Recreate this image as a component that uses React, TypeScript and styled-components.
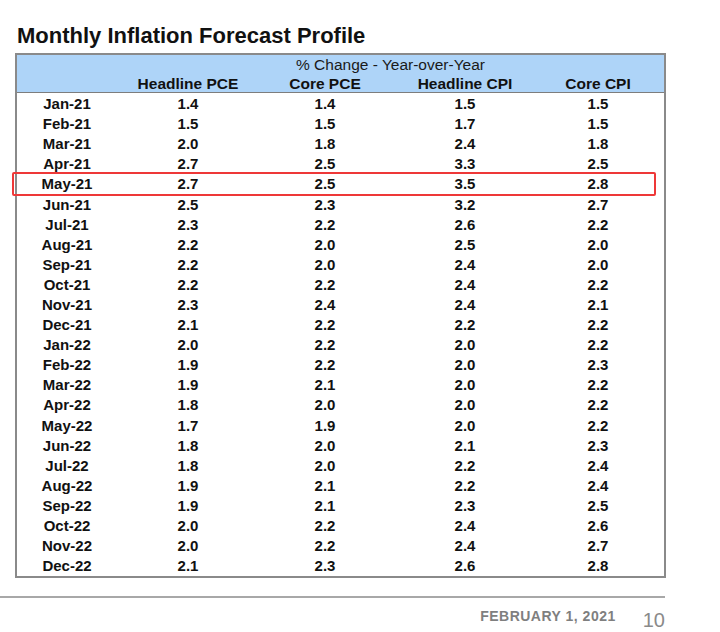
import React from "react";
import styled, { createGlobalStyle } from "styled-components";

const GlobalStyle = createGlobalStyle`
  html, body {
    margin: 0;
    padding: 0;
    background: #ffffff;
  }
  body {
    font-family: "Liberation Sans", Arial, sans-serif;
    color: #111111;
  }
`;

const Page = styled.div`
  width: 720px;
  height: 632px;
  padding-top: 23px;
  box-sizing: border-box;
  overflow: hidden;
`;

const Content = styled.div`
  padding-left: 15px;
`;

const Title = styled.h1`
  margin: 0 0 4px 2px;
  font-size: 22px;
  line-height: 26px;
  font-weight: 700;
  color: #111111;
`;

const TableWrap = styled.div`
  position: relative;
  width: 651px;
  box-sizing: border-box;
  border: 2px solid #8a8a8a;
`;

const cols = "100px 142px 132px 148px 118px 1fr";

const Header = styled.div`
  display: grid;
  grid-template-columns: ${cols};
  background: #aed4f8;
  border-bottom: 1px solid #7d7d7d;
  padding-top: 1px;
  height: 38px;
  box-sizing: border-box;
`;

const SpanLabel = styled.div`
  grid-column: 2 / -1;
  text-align: center;
  font-size: 15.5px;
  line-height: 18px;
  font-weight: 400;
  color: #1a1a1a;
`;

const ColLabel = styled.div<{ $col: number }>`
  grid-column: ${(p) => p.$col};
  grid-row: 2;
  text-align: center;
  font-size: 15.5px;
  line-height: 19px;
  font-weight: 700;
  color: #111111;
  white-space: nowrap;
`;

const Body = styled.div`
  padding-top: 1px;
`;

const Row = styled.div`
  display: grid;
  grid-template-columns: ${cols};
  height: 20.1px;
  align-items: center;
`;

const Cell = styled.div`
  text-align: center;
  font-size: 15px;
  line-height: 20px;
  font-weight: 700;
  color: #111111;
  white-space: nowrap;
`;

const Highlight = styled.div`
  position: absolute;
  left: -5px;
  top: 117px;
  width: 644px;
  height: 24px;
  box-sizing: border-box;
  border: 2px solid #ee3838;
  border-radius: 2px;
  pointer-events: none;
`;

const FooterRule = styled.div`
  width: 665px;
  height: 2px;
  background: #a8a8a8;
  margin-top: 18px;
`;

const FooterRow = styled.div`
  width: 665px;
  display: flex;
  justify-content: flex-end;
  align-items: flex-start;
  gap: 27px;
  margin-top: 10px;
`;

const DateText = styled.span`
  font-size: 14px;
  line-height: 16px;
  font-weight: 700;
  letter-spacing: 0.5px;
  color: #7f7f7f;
`;

const PageNum = styled.span`
  font-size: 20px;
  line-height: 22px;
  font-weight: 400;
  color: #8a8a8a;
  margin-top: 1px;
`;

type R = [string, string, string, string, string];

const rows: R[] = [
  ["Jan-21", "1.4", "1.4", "1.5", "1.5"],
  ["Feb-21", "1.5", "1.5", "1.7", "1.5"],
  ["Mar-21", "2.0", "1.8", "2.4", "1.8"],
  ["Apr-21", "2.7", "2.5", "3.3", "2.5"],
  ["May-21", "2.7", "2.5", "3.5", "2.8"],
  ["Jun-21", "2.5", "2.3", "3.2", "2.7"],
  ["Jul-21", "2.3", "2.2", "2.6", "2.2"],
  ["Aug-21", "2.2", "2.0", "2.5", "2.0"],
  ["Sep-21", "2.2", "2.0", "2.4", "2.0"],
  ["Oct-21", "2.2", "2.2", "2.4", "2.2"],
  ["Nov-21", "2.3", "2.4", "2.4", "2.1"],
  ["Dec-21", "2.1", "2.2", "2.2", "2.2"],
  ["Jan-22", "2.0", "2.2", "2.0", "2.2"],
  ["Feb-22", "1.9", "2.2", "2.0", "2.3"],
  ["Mar-22", "1.9", "2.1", "2.0", "2.2"],
  ["Apr-22", "1.8", "2.0", "2.0", "2.2"],
  ["May-22", "1.7", "1.9", "2.0", "2.2"],
  ["Jun-22", "1.8", "2.0", "2.1", "2.3"],
  ["Jul-22", "1.8", "2.0", "2.2", "2.4"],
  ["Aug-22", "1.9", "2.1", "2.2", "2.4"],
  ["Sep-22", "1.9", "2.1", "2.3", "2.5"],
  ["Oct-22", "2.0", "2.2", "2.4", "2.6"],
  ["Nov-22", "2.0", "2.2", "2.4", "2.7"],
  ["Dec-22", "2.1", "2.3", "2.6", "2.8"],
];

const labels = ["Headline PCE", "Core PCE", "Headline CPI", "Core CPI"];

export default function App() {
  return (
    <>
      <GlobalStyle />
      <Page>
        <Content>
          <Title>Monthly Inflation Forecast Profile</Title>
          <TableWrap>
            <Header>
              <SpanLabel>% Change - Year-over-Year</SpanLabel>
              {labels.map((l, i) => (
                <ColLabel key={l} $col={i + 2}>
                  {l}
                </ColLabel>
              ))}
            </Header>
            <Body>
              {rows.map((r) => (
                <Row key={r[0]}>
                  {r.map((c, i) => (
                    <Cell key={i}>{c}</Cell>
                  ))}
                </Row>
              ))}
            </Body>
            <Highlight />
          </TableWrap>
        </Content>
        <FooterRule />
        <FooterRow>
          <DateText>FEBRUARY 1, 2021</DateText>
          <PageNum>10</PageNum>
        </FooterRow>
      </Page>
    </>
  );
}
